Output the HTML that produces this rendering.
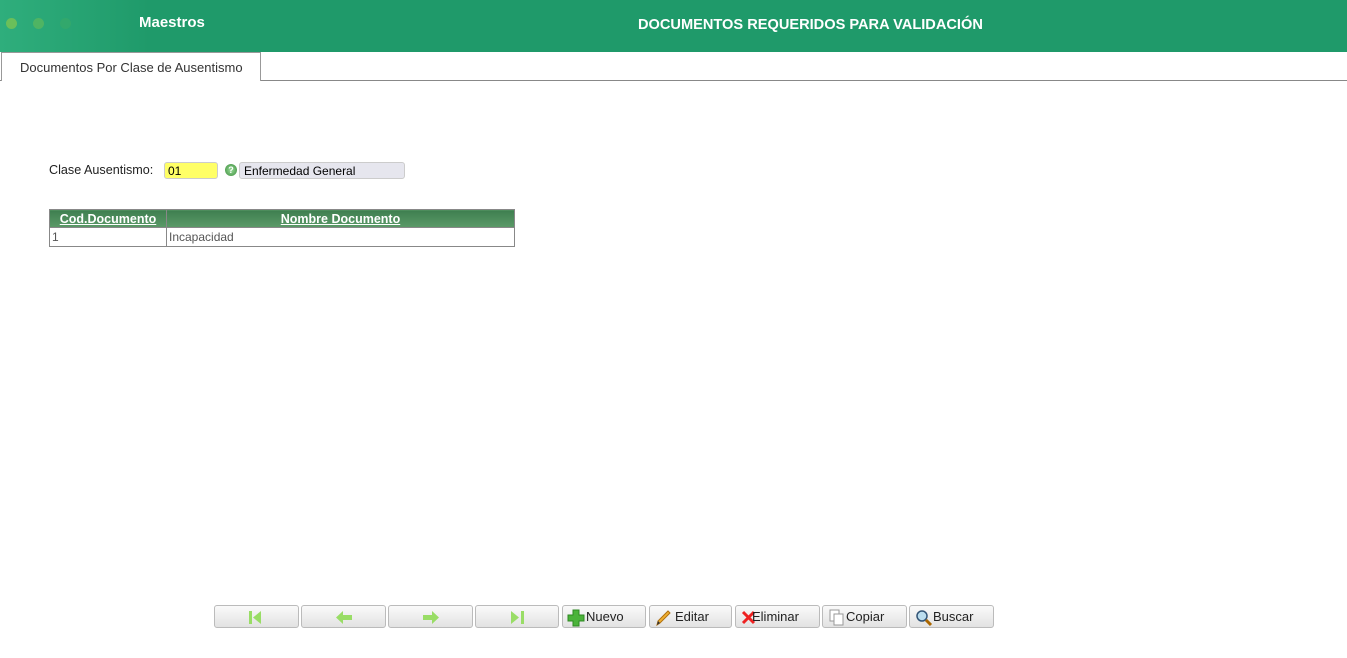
<!DOCTYPE html>
<html><head><meta charset="utf-8"><style>
body{margin:0;width:1347px;height:658px;background:#fff;font-family:"Liberation Sans",sans-serif;position:relative;overflow:hidden}
.hdr{position:absolute;left:0;top:0;width:1347px;height:52px;background:#1f9a6a}
.glow{position:absolute;left:0;top:0;width:150px;height:52px;background:linear-gradient(90deg,#2fae7c,#1f9a6a)}
.dot{position:absolute;top:18px;width:11px;height:11px;border-radius:50%}
.t1{position:absolute;left:139px;top:14px;color:#fff;font-weight:bold;font-size:15px}
.t2{position:absolute;left:638px;top:17px;color:#fff;font-weight:bold;font-size:14.6px}
.tabline{position:absolute;left:0;top:80px;width:1347px;height:1px;background:#888}
.tab{position:absolute;left:1px;top:52px;width:260px;height:29px;border:1px solid #999;border-bottom:none;background:#fff;font-size:13px;color:#333;box-sizing:border-box}
.tab span{position:absolute;left:18px;top:7px}
.lbl{position:absolute;left:49px;top:163px;font-size:12.6px;color:#222}
.in1{position:absolute;left:164px;top:162px;background:#ffff66;border:1px solid #ccc;border-radius:3px;font-size:12px;padding-left:3px;box-sizing:border-box;width:54px;height:17px;line-height:16px}
.ico{position:absolute;left:225px;top:164px;width:12px;height:12px;border-radius:50%;background:radial-gradient(#9d9,#3a8a3a);color:#fff;font-size:9px;text-align:center;line-height:12px;font-weight:bold}
.in2{position:absolute;left:239px;top:162px;width:166px;height:17px;background:#e6e6ee;border:1px solid #ccc;border-radius:3px;font-size:12px;padding-left:4px;box-sizing:border-box;line-height:17px}
table{position:absolute;left:49px;top:209px;border-collapse:collapse;width:466px;font-size:12px}
th{background:linear-gradient(#3f7f50,#5b9a68);color:#fff;text-decoration:underline;height:17px;padding:0;border:1px solid #888;font-size:12.5px}
td{border:1px solid #888;color:#555;height:18px;padding:0 2px}
.btn{position:absolute;top:605px;height:23px;border:1px solid #bbb;border-radius:3px;background:linear-gradient(#fafafa,#e2e2e2);box-sizing:border-box;font-size:13px;color:#222;line-height:22px}
.btn svg{position:absolute}
</style></head><body>
<div class="hdr"><div class="glow"></div>
<div class="dot" style="left:6px;background:#6bbf5a"></div>
<div class="dot" style="left:33px;background:#4fb463"></div>
<div class="dot" style="left:60px;background:#32a86c"></div>
<div class="t1">Maestros</div><div class="t2">DOCUMENTOS REQUERIDOS PARA VALIDACIÓN</div></div>
<div class="tabline"></div>
<div class="tab"><span>Documentos Por Clase de Ausentismo</span></div>
<div class="lbl">Clase Ausentismo:</div>
<div class="in1">01</div>
<div class="ico">?</div>
<div class="in2">Enfermedad General</div>
<table><tr><th style="width:116px">Cod.Documento</th><th>Nombre Documento</th></tr>
<tr><td>1</td><td>Incapacidad</td></tr></table>

<div class="btn" style="left:214px;width:85px"><svg style="left:33px;top:4px" width="18" height="15"><rect x="1" y="1" width="3" height="13" fill="#9d6"/><path d="M5 7.5L13 1V14Z" fill="#9d6"/></svg></div>
<div class="btn" style="left:301px;width:85px"><svg style="left:33px;top:4px" width="18" height="15"><path d="M1 7.5L8 1V5H17V10H8V14Z" fill="#9d6"/></svg></div>
<div class="btn" style="left:388px;width:85px"><svg style="left:33px;top:4px" width="18" height="15"><path d="M17 7.5L10 1V5H1V10H10V14Z" fill="#9d6"/></svg></div>
<div class="btn" style="left:475px;width:84px"><svg style="left:33px;top:4px" width="18" height="15"><path d="M2 1L10 7.5L2 14Z" fill="#9d6"/><rect x="12" y="1" width="3" height="13" fill="#9d6"/></svg></div>
<div class="btn" style="left:562px;width:84px"><svg style="left:4px;top:3px" width="18" height="18"><path d="M6 1H12V6H17V12H12V17H6V12H1V6H6Z" fill="#4bb33a" stroke="#2e8a22"/></svg><span style="position:absolute;left:23px">Nuevo</span></div>
<div class="btn" style="left:649px;width:83px"><svg style="left:4px;top:3px" width="18" height="18"><path d="M3 16L4 12L14 2L16 4L6 14Z" fill="#f0b030" stroke="#b07010"/><path d="M3 16L4 12L6 14Z" fill="#333"/></svg><span style="position:absolute;left:25px">Editar</span></div>
<div class="btn" style="left:735px;width:85px"><svg style="left:5px;top:4px" width="15" height="15"><path d="M2 2L13 13M13 2L2 13" stroke="#e22" stroke-width="3"/></svg><span style="position:absolute;left:16px">Eliminar</span></div>
<div class="btn" style="left:822px;width:85px"><svg style="left:6px;top:3px" width="16" height="17"><rect x="1" y="1" width="9" height="11" fill="#fff" stroke="#999"/><rect x="5" y="5" width="9" height="11" fill="#fff" stroke="#999"/></svg><span style="position:absolute;left:23px">Copiar</span></div>
<div class="btn" style="left:909px;width:85px"><svg style="left:5px;top:3px" width="18" height="18"><circle cx="7" cy="7" r="5" fill="#bde" stroke="#357"  stroke-width="1.5"/><path d="M11 11L16 16" stroke="#a60" stroke-width="3"/></svg><span style="position:absolute;left:23px">Buscar</span></div>
</body></html>
